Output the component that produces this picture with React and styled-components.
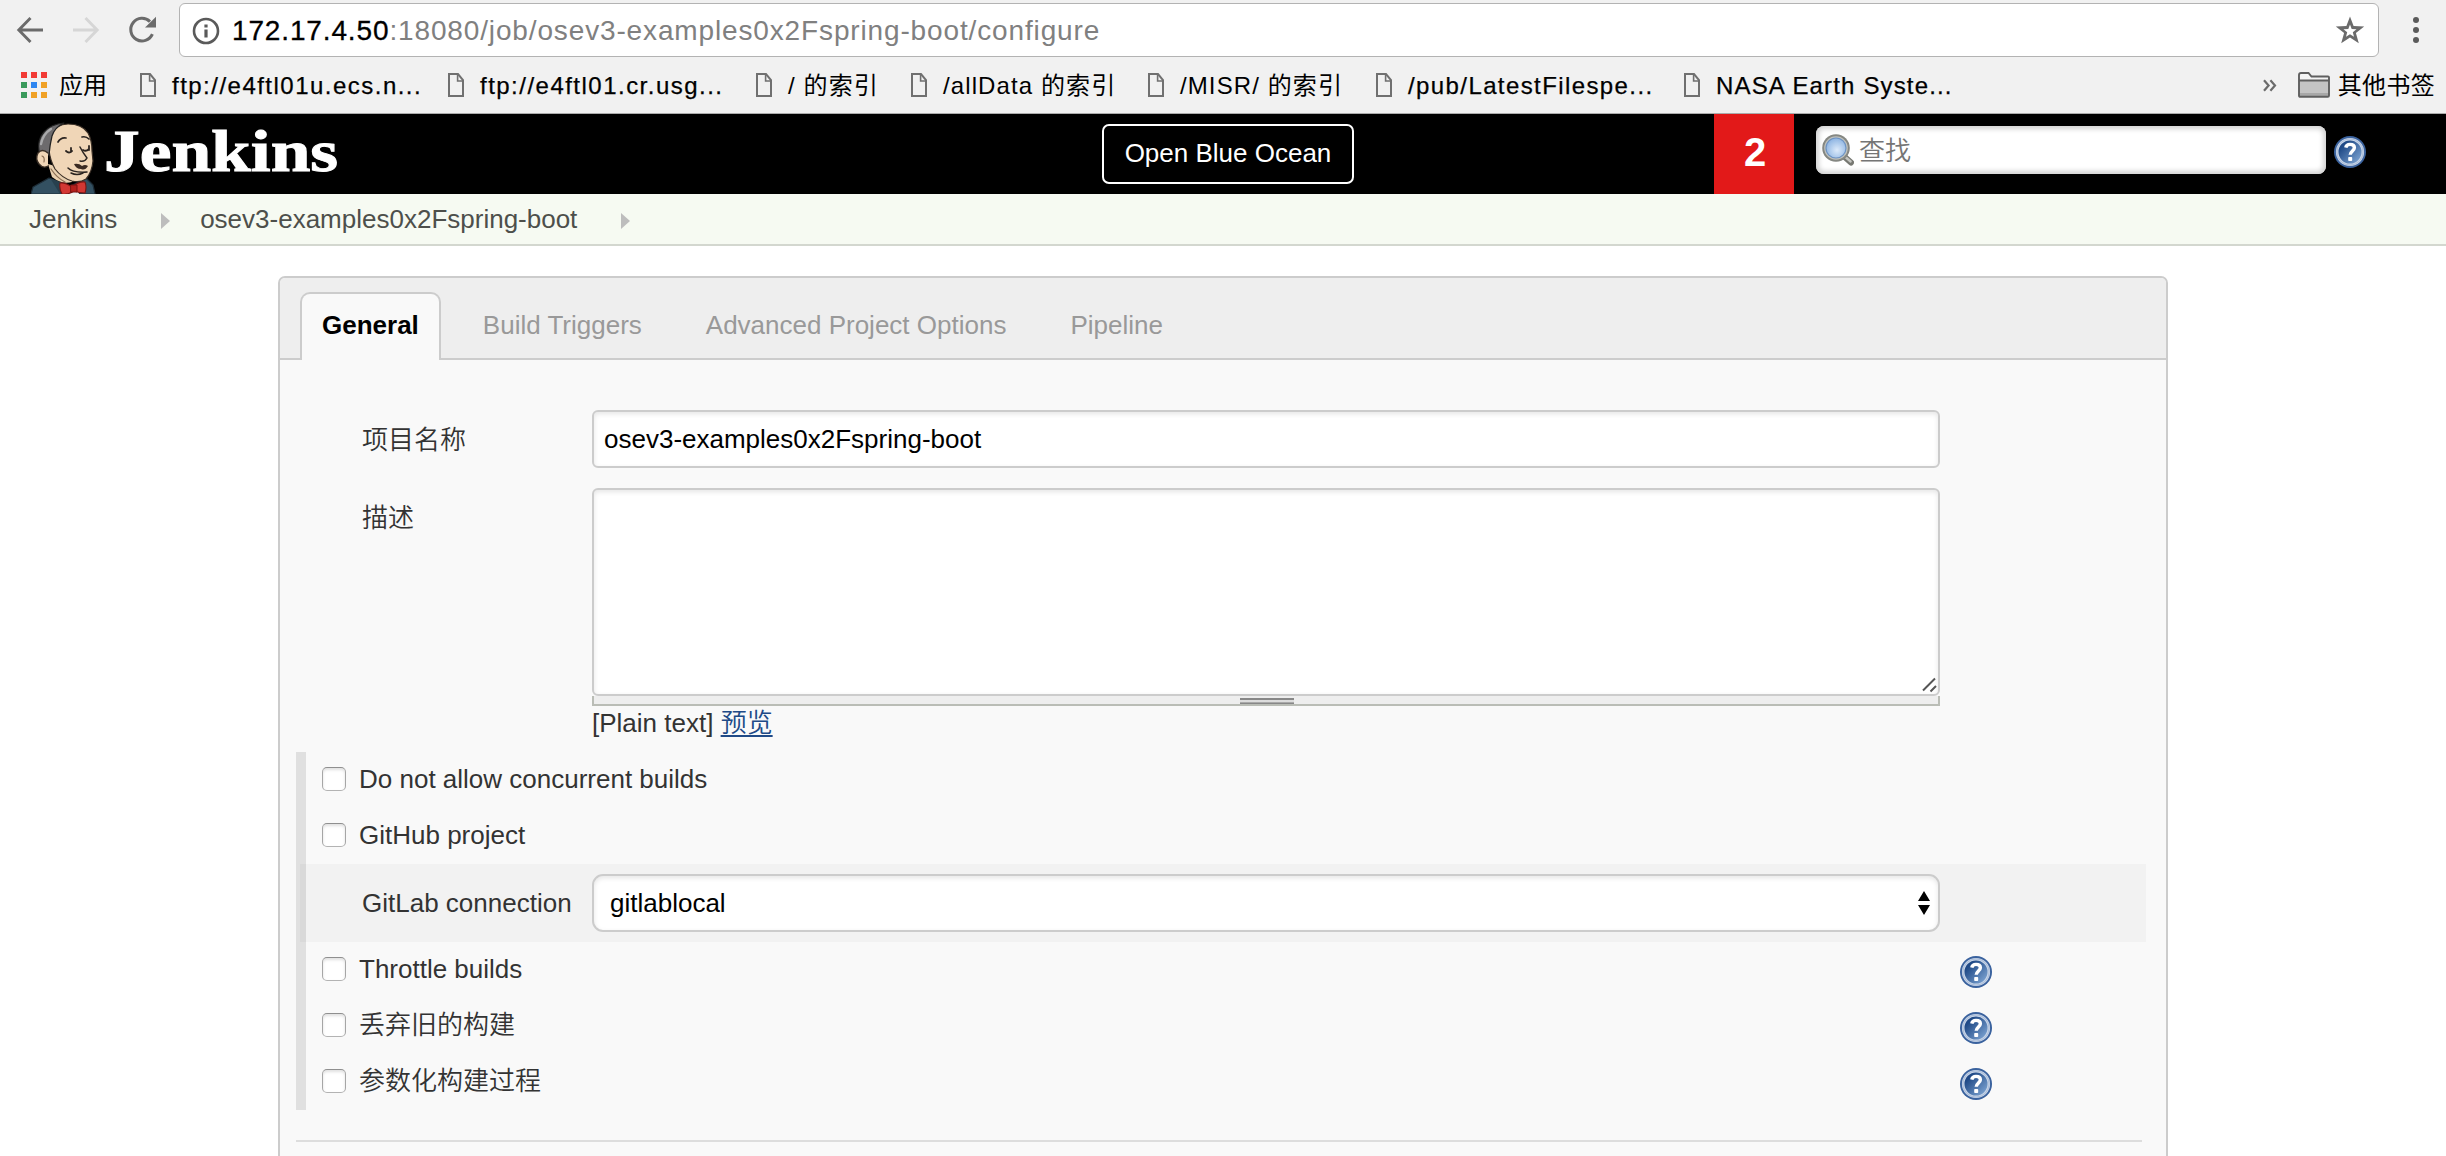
import React from "react";
import styled, { createGlobalStyle, css } from "styled-components";

const Global = createGlobalStyle`
  *, *::before, *::after { box-sizing: border-box; }
  html, body { margin: 0; padding: 0; background: #fff; }
  body, input, textarea, select, button {
    font-family: "Liberation Sans", Arial, "Noto Sans CJK SC", sans-serif;
    font-size: 26px;
  }
  svg { display: block; flex: none; }
`;

const Page = styled.div`
  width: 2446px;
  height: 1156px;
  overflow: hidden;
  color: #333;
  line-height: 32px;
`;

/* ---------- browser chrome ---------- */

const Chrome = styled.div`
  height: 114px;
  background: #f1f1f1;
  border-bottom: 1px solid #ababab;
`;

const AddressRow = styled.div`
  display: flex;
  align-items: center;
  height: 57px;
  padding: 3px 0 0 16px;
`;

const NavButtons = styled.div`
  display: flex;
  gap: 28px;
  width: 163px;
`;

const AddressBar = styled.div`
  display: flex;
  align-items: center;
  width: 2200px;
  height: 54px;
  padding: 1px 13px 0 12px;
  background: #fff;
  border: 1px solid #b3b3b3;
  border-radius: 6px;
`;

const Url = styled.span`
  flex: 1;
  margin-left: 12px;
  padding-top: 1px;
  font-size: 28px;
  letter-spacing: 0.86px;
  color: #808080;
  white-space: nowrap;
`;

const Host = styled.span`
  color: #000;
  -webkit-text-stroke: 0.3px #000;
`;

const MenuDots = styled.div`
  display: flex;
  flex-direction: column;
  gap: 4px;
  margin-left: 34px;
`;

const Dot = styled.i`
  width: 6px;
  height: 6px;
  border-radius: 50%;
  background: #5a5a5a;
`;

const BookmarkRow = styled.div`
  display: flex;
  align-items: center;
  height: 56px;
  padding: 0 11px 0 21px;
`;

const BookmarkText = styled.span`
  width: ${(p) => (p.$width ? `${p.$width}px` : "auto")};
  padding-top: 1px;
  font-size: 24px;
  letter-spacing: ${(p) => p.$track ?? 1.1}px;
  color: #000;
  -webkit-text-stroke: ${(p) => (p.$cjk ? 0 : 0.25)}px #000;
  white-space: nowrap;
`;

const Bookmark = styled.div`
  display: flex;
  align-items: center;
  gap: 16px;
  margin-right: 34px;
`;

const OtherBookmarks = styled.div`
  display: flex;
  align-items: center;
  gap: 8px;
  margin-left: 21px;
`;

const AppsGrid = styled.div`
  display: grid;
  grid-template-columns: repeat(3, 6px);
  gap: 4px;
  margin-right: 12px;
`;

const AppCell = styled.i`
  height: 6px;
  background: ${(p) => p.$color};
`;

const Overflow = styled.div`
  display: flex;
  align-items: center;
  margin-left: auto;
`;

/* ---------- Jenkins header ---------- */

const Header = styled.header`
  display: flex;
  height: 80px;
  background: #000;
`;

const Brand = styled.div`
  display: flex;
  width: 1102px;
  padding: 6px 0 0 31px;
`;

const Wordmark = styled.span`
  height: 60px;
  margin: 1px 0 0 8px;
  font-family: "Liberation Serif", "Times New Roman", serif;
  font-weight: bold;
  font-size: 60px;
  line-height: 60px;
  color: #fff;
  transform: scaleX(1.19);
  transform-origin: 0 50%;
  -webkit-text-stroke: 1px #fff;
`;

const OceanButton = styled.button`
  width: 252px;
  height: 60px;
  margin-top: 10px;
  padding: 0 0 2px;
  background: #000;
  color: #fff;
  border: 2px solid #fff;
  border-radius: 7px;
`;

const Alert = styled.div`
  display: flex;
  align-items: center;
  justify-content: center;
  width: 80px;
  margin-left: 360px;
  padding-bottom: 4px;
  padding-left: 2px;
  background: #e21919;
  color: #fff;
  font-size: 40px;
  font-weight: bold;
`;

const Search = styled.div`
  display: flex;
  align-items: center;
  width: 510px;
  height: 48px;
  margin: 12px 8px 0 22px;
  padding: 0 6px;
  background: #fff;
  border-radius: 8px;
  box-shadow: inset 0 0 5px 3px #d3d3d3;
`;

const SearchInput = styled.input`
  flex: 1;
  margin: 3px 0 0 5px;
  padding: 0;
  border: 0;
  background: none;
  font-weight: 350;
  &::placeholder { color: #757575; }
`;

const HeaderHelp = styled.div`
  margin-top: 22px;
`;

const Breadcrumbs = styled.nav`
  display: flex;
  align-items: center;
  height: 52px;
  padding-left: 29px;
  background: #f6faf2;
  border-bottom: 2px solid #d3d7cf;
  color: #4d4f4b;
`;

const Crumb = styled.span`
  margin-right: 44px;
`;

const CrumbArrow = styled.i`
  margin: 3px 30px 0 0;
  border: 8px solid transparent;
  border-left: 9px solid #bdbdbd;
  border-right: 0;
`;

/* ---------- configuration panel ---------- */

const Panel = styled.main`
  width: 1890px;
  height: 890px;
  margin: 30px 0 0 278px;
  background: #f9f9f9;
  border: 2px solid #ccc;
  border-radius: 7px;
`;

const TabBar = styled.div`
  display: flex;
  gap: 20px;
  height: 82px;
  padding: 14px 0 0 20px;
  background: #eee;
  border-bottom: 2px solid #ccc;
  border-radius: 5px 5px 0 0;
`;

const Tab = styled.div`
  height: 68px;
  padding: 15px 20px 0;
  border: 2px solid transparent;
  border-bottom: 0;
  border-radius: 10px 10px 0 0;
  color: #999;
  ${(p) =>
    p.$active &&
    css`
      background: #f9f9f9;
      border-color: #ccc;
      color: #000;
      font-weight: bold;
    `}
`;

const Form = styled.div`
  padding: 50px 24px 0 16px;
`;

const Field = styled.div`
  display: flex;
  margin-bottom: 20px;
  padding-left: 66px;
`;

const Label = styled.label`
  width: 230px;
  padding-top: 14px;
  font-weight: 350;
`;

const fieldBox = css`
  display: block;
  width: 1348px;
  margin: 0;
  background: #fff;
  color: #000;
  border: 2px solid #ccc;
  border-radius: 6px;
  box-shadow: inset 0 2px 5px rgba(0, 0, 0, 0.1);
  outline: none;
`;

const TextInput = styled.input`
  ${fieldBox}
  height: 58px;
  padding: 0 10px 0 10px;
`;

const TextBox = styled.textarea`
  ${fieldBox}
  height: 208px;
  resize: none;
`;

const TextBoxWrap = styled.div`
  position: relative;
`;

const Corner = styled.svg`
  position: absolute;
  right: 2px;
  top: 189px;
`;

const Handle = styled.div`
  display: flex;
  justify-content: center;
  height: 10px;
  padding-top: 2px;
  background: #eee;
  border: 2px solid #babdb6;
  border-top: 0;
`;

const Grip = styled.i`
  width: 54px;
  height: 6px;
  margin-left: 2px;
  background: linear-gradient(#888 0 2px, #ddd 2px 4px, #aaa 4px 5px, #888 5px 6px);
`;

const Format = styled.div`
  margin-top: 1px;
`;

const Preview = styled.a`
  color: #204a87;
  font-weight: 350;
  text-decoration: underline;
  text-decoration-thickness: 2px;
  text-underline-offset: 3px;
  cursor: pointer;
`;

const Options = styled.section`
  margin-top: -7px;
  border-left: 10px solid #e0e0e0;
`;

const Option = styled.div`
  display: flex;
  align-items: center;
  height: 56px;
  padding: 0 150px 2px 16px;
`;

const Checkbox = styled.input`
  appearance: none;
  width: 24px;
  height: 24px;
  margin: 0 13px 0 0;
  background: #fff;
  border: 1px solid #a9a9a9;
  border-color: #8f8f8f #a6a6a6 #b3b3b3;
  border-radius: 5px;
  box-shadow: inset 0 2px 3px rgba(0, 0, 0, 0.12);
`;

const OptionText = styled.label`
  flex: 1;
  font-weight: 350;
`;

const OptionHelp = styled.div`
  margin-top: 6px;
`;

const Connection = styled.div`
  display: flex;
  align-items: center;
  height: 78px;
  margin: 0 -4px 0 -6px;
  padding-left: 62px;
  background: rgba(0, 0, 0, 0.027);
`;

const ConnectionLabel = styled.label`
  width: 230px;
`;

const SelectWrap = styled.div`
  position: relative;
`;

const Select = styled.select`
  ${fieldBox}
  appearance: none;
  height: 58px;
  padding: 0 16px;
  border-radius: 11px;
`;

const Stepper = styled.svg`
  position: absolute;
  right: 10px;
  top: 17px;
`;

const Divider = styled.hr`
  height: 2px;
  margin: 30px 0 0;
  border: 0;
  background: #ddd;
`;

/* ---------- icons ---------- */

const ArrowIcon = ({ color, flip }) => (
  <svg width="28" height="28" viewBox="0 0 28 28" fill="none" stroke={color} strokeWidth="2.9">
    <g transform={flip ? "translate(28 0) scale(-1 1)" : undefined}>
      <path d="M27 14H3M14.5 2L2.8 14l11.7 12" />
    </g>
  </svg>
);

const ReloadIcon = () => (
  <svg width="30" height="28" viewBox="0 0 30 28">
    <path d="M24.4 18.2A11.3 11.3 0 1 1 22 5.6" fill="none" stroke="#6b6b6b" strokeWidth="3" />
    <path d="M28 .8v10.8H17z" fill="#6b6b6b" />
  </svg>
);

const InfoIcon = () => (
  <svg width="28" height="28" viewBox="0 0 28 28">
    <circle cx="14" cy="14" r="12" fill="none" stroke="#5a5a5a" strokeWidth="2.6" />
    <path d="M12.4 7.6h3.2v3h-3.2zM12.4 12.6h3.2v8h-3.2z" fill="#5a5a5a" />
  </svg>
);

const StarIcon = () => (
  <svg width="30" height="30" viewBox="0 0 30 30">
    <path
      fillRule="evenodd"
      d="M15 0.5l3.6 9.6 10.6.4-8.3 6.5 2.9 10.3L15 21.5l-8.8 5.8 2.9-10.3L.8 10.5l10.6-.4zM15 8.6l-1.7 4.3-4.8.3 3.7 3-1.2 4.6 4-2.6 4 2.6-1.2-4.6 3.7-3-4.8-.3z"
      fill="#6b6b6b"
    />
  </svg>
);

const FileIcon = () => (
  <svg width="16" height="24" viewBox="0 0 16 24" fill="none" stroke="#707070" strokeWidth="2">
    <path d="M1 1h9l5 6v16H1z" />
    <path d="M9.6 1.5V8H15" strokeWidth="1.6" />
  </svg>
);

const FolderIcon = () => (
  <svg width="32" height="26" viewBox="0 0 32 26">
    <path d="M1 23.5V3Q1 1 3 1h7.5l3 3.5H30q1 0 1 1v18q0 1.3-1.3 1.3H2.3Q1 24.8 1 23.5z" fill="#f4f4f4" />
    <path d="M1 8.5h30V22H1z" fill="#c4c4c4" />
    <path d="M1 21h30v3H1z" fill="#a8a8a8" />
    <path
      d="M1 23.5V3Q1 1 3 1h7.5l3 3.5H30q1 0 1 1v18q0 1.3-1.3 1.3H2.3Q1 24.8 1 23.5zM1 8.5h30"
      fill="none"
      stroke="#5f5f5f"
      strokeWidth="1.9"
    />
  </svg>
);

const ChevronsIcon = () => (
  <svg width="14" height="13" viewBox="0 0 14 13" fill="none" stroke="#6b6b6b" strokeWidth="2.2">
    <path d="M1 1.2l4.6 5.3L1 11.8M7.4 1.2L12 6.5l-4.6 5.3" />
  </svg>
);

const HelpIcon = () => (
  <svg width="32" height="32" viewBox="0 0 32 32">
    <defs>
      <linearGradient id="helpFill" x1="0.1" y1="0.15" x2="0.9" y2="0.9">
        <stop offset="0.15" stopColor="#204a87" />
        <stop offset="1" stopColor="#7fa6d4" />
      </linearGradient>
    </defs>
    <circle cx="16" cy="16" r="16" fill="#3a629e" />
    <circle cx="16" cy="16" r="12.8" fill="url(#helpFill)" stroke="#c8d5e8" strokeWidth="2.6" />
    <circle cx="16" cy="16" r="13.1" fill="none" stroke="#9db3d3" strokeWidth="0.7" />
    <path
      d="M11.8 11.6c.4-2.4 2.2-3.2 4.2-3.2 2.6 0 4.4 1.2 4.4 3.3 0 2.9-4.2 3.6-4.2 7.1"
      fill="none"
      stroke="#fff"
      strokeWidth="3.4"
    />
    <rect x="14.2" y="21" width="4" height="4" rx="0.8" fill="#fff" />
  </svg>
);

const MagnifierIcon = () => (
  <svg width="32" height="32" viewBox="0 0 32 32">
    <defs>
      <radialGradient id="lens" cx="0.55" cy="0.6" r="0.6">
        <stop offset="0" stopColor="#dceafa" />
        <stop offset="1" stopColor="#8db4e2" />
      </radialGradient>
    </defs>
    <path d="M21 21.5l8 7" stroke="#777872" strokeWidth="6" strokeLinecap="round" />
    <path d="M24 23.5l4.6 4" stroke="#c4c5c0" strokeWidth="2.4" strokeLinecap="round" />
    <circle cx="14" cy="14" r="13.8" fill="#858782" />
    <circle cx="14" cy="14" r="11.8" fill="#bfc1bc" />
    <circle cx="14" cy="14" r="10" fill="url(#lens)" stroke="#6d93c4" strokeWidth="1.2" />
  </svg>
);

const ButlerIcon = () => (
  <svg width="65" height="74" viewBox="0 0 65 74" strokeLinecap="round" strokeLinejoin="round">
    <path d="M0 74l2-7 16-9 20 9 17-9 7 7 2 9z" fill="#335061" stroke="#1d2c36" strokeWidth="1.2" />
    <path d="M19 58l10 16h14l-6-9z" fill="#28404e" />
    <path d="M17 44l4 13q10 8 20 5l4-10z" fill="#e8cfae" />
    <path d="M35 66l10-1 3 9H36z" fill="#eef1f3" />
    <path
      d="M19 16Q25 4 37 4q14 0 20 9 4 7 4 18l1 10q-1 11-7 18-6 4-14 2-10-3-17-12-5-9-6-19z"
      fill="#f0d6b7"
      stroke="#3a2f26"
      strokeWidth="1.2"
    />
    <path d="M8 31Q6 20 13 12 20 4 33 3q-9 4-12 13-2 8-3 19l-6 2z" fill="#6d6b6d" stroke="#222" strokeWidth="1.2" />
    <path d="M10 24Q12 14 20 9" fill="none" stroke="#a9a9ab" strokeWidth="2.4" />
    <path d="M17 33q-6-5-10 0-3 6 1 11 4 5 9 2" fill="#f0d6b7" stroke="#3a2f26" strokeWidth="1.4" />
    <path d="M11 36q3 1 2 6" fill="none" stroke="#8b6f55" strokeWidth="1.2" />
    <g fill="none" stroke="#2b2420">
      <path d="M27 22q3-5 8-4M51 17q4-1 7 2" strokeWidth="1.7" />
      <path d="M35 31q3 3 6 0M52 30q3 2 6-1M40 28v4M58 26v4" strokeWidth="1.8" />
      <path d="M49 27q3 6 7 11-2 4-7 3" strokeWidth="1.5" />
      <path d="M37 48q5 5 19 4M40 53q6 3 12 0" strokeWidth="1.5" />
    </g>
    <path d="M43 44q5-1 8 2 3-2 6 0-3 5-7 3-5 0-7-5z" fill="#3a2a22" />
    <path d="M20 49q6 9 14 13" fill="none" stroke="#8b6f55" strokeWidth="1.2" />
    <path
      d="M29 63q5-1 12 4 7-6 13-5 2 5 0 11-6 0-11-2-6 4-12 3-3-5-2-11z"
      fill="#d33833"
      stroke="#7b1512"
      strokeWidth="1.1"
    />
    <path d="M40 65h6v7h-6z" fill="#b3211d" stroke="#7b1512" />
  </svg>
);

const APP_COLORS = [
  "#f23b36", "#f23b36", "#f23b36",
  "#3a9a5b", "#2f86f0", "#f0a126",
  "#3a9a5b", "#f0a126", "#f0a126",
];

const BOOKMARKS = [
  { text: "ftp://e4ftl01u.ecs.n...", width: 242, track: 1.48 },
  { text: "ftp://e4ftl01.cr.usg...", width: 242, track: 1.48 },
  { text: "/ 的索引", width: 89, cjk: true },
  { text: "/allData 的索引", width: 171, cjk: true },
  { text: "/MISR/ 的索引", width: 162, cjk: true },
  { text: "/pub/LatestFilespe...", width: 242, track: 1.4 },
  { text: "NASA Earth Syste...", width: 242, track: 1.15 },
];

const TABS = ["General", "Build Triggers", "Advanced Project Options", "Pipeline"];

const CheckOption = ({ text, help }) => (
  <Option>
    <Checkbox type="checkbox" />
    <OptionText>{text}</OptionText>
    {help && (
      <OptionHelp>
        <HelpIcon />
      </OptionHelp>
    )}
  </Option>
);

export default function App() {
  return (
    <Page>
      <Global />
      <Chrome>
        <AddressRow>
          <NavButtons>
            <ArrowIcon color="#6b6b6b" />
            <ArrowIcon color="#d6d6d6" flip />
            <ReloadIcon />
          </NavButtons>
          <AddressBar>
            <InfoIcon />
            <Url>
              <Host>172.17.4.50</Host>:18080/job/osev3-examples0x2Fspring-boot/configure
            </Url>
            <StarIcon />
          </AddressBar>
          <MenuDots>
            <Dot />
            <Dot />
            <Dot />
          </MenuDots>
        </AddressRow>
        <BookmarkRow>
          <AppsGrid>
            {APP_COLORS.map((c, i) => (
              <AppCell key={i} $color={c} />
            ))}
          </AppsGrid>
          <BookmarkText $cjk $width={81} $track={0}>应用</BookmarkText>
          {BOOKMARKS.map((b) => (
            <Bookmark key={b.text}>
              <FileIcon />
              <BookmarkText $width={b.width} $cjk={b.cjk} $track={b.track}>
                {b.text}
              </BookmarkText>
            </Bookmark>
          ))}
          <Overflow>
            <ChevronsIcon />
            <OtherBookmarks>
              <FolderIcon />
              <BookmarkText $cjk $track={0.3}>其他书签</BookmarkText>
            </OtherBookmarks>
          </Overflow>
        </BookmarkRow>
      </Chrome>

      <Header>
        <Brand>
          <ButlerIcon />
          <Wordmark>Jenkins</Wordmark>
        </Brand>
        <OceanButton>Open Blue Ocean</OceanButton>
        <Alert>2</Alert>
        <Search>
          <MagnifierIcon />
          <SearchInput placeholder="查找" />
        </Search>
        <HeaderHelp>
          <HelpIcon />
        </HeaderHelp>
      </Header>

      <Breadcrumbs>
        <Crumb>Jenkins</Crumb>
        <CrumbArrow />
        <Crumb>osev3-examples0x2Fspring-boot</Crumb>
        <CrumbArrow />
      </Breadcrumbs>

      <Panel>
        <TabBar>
          {TABS.map((t, i) => (
            <Tab key={t} $active={i === 0}>
              {t}
            </Tab>
          ))}
        </TabBar>
        <Form>
          <Field>
            <Label>项目名称</Label>
            <TextInput defaultValue="osev3-examples0x2Fspring-boot" />
          </Field>
          <Field>
            <Label>描述</Label>
            <TextBoxWrap>
              <TextBox />
              <Corner width="16" height="16" viewBox="0 0 16 16" stroke="#555" strokeWidth="2">
                <path d="M1 13.5L13 1.5M8.5 14.5l5.5-5.5" />
              </Corner>
              <Handle>
                <Grip />
              </Handle>
              <Format>
                [Plain text] <Preview>预览</Preview>
              </Format>
            </TextBoxWrap>
          </Field>
          <Options>
            <CheckOption text="Do not allow concurrent builds" />
            <CheckOption text="GitHub project" />
            <Connection>
              <ConnectionLabel>GitLab connection</ConnectionLabel>
              <SelectWrap>
                <Select defaultValue="gitlablocal">
                  <option>gitlablocal</option>
                </Select>
                <Stepper width="12" height="24" viewBox="0 0 12 24">
                  <path d="M6 0l6 10H0zM0 14h12L6 24z" fill="#000" />
                </Stepper>
              </SelectWrap>
            </Connection>
            <CheckOption text="Throttle builds" help />
            <CheckOption text="丢弃旧的构建" help />
            <CheckOption text="参数化构建过程" help />
          </Options>
          <Divider />
        </Form>
      </Panel>
    </Page>
  );
}
